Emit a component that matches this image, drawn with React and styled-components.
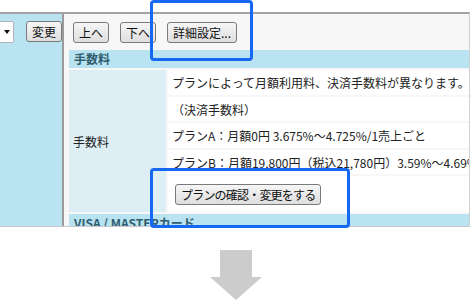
import styled, { createGlobalStyle } from 'styled-components';

const GlobalStyle = createGlobalStyle`
  html, body {
    margin: 0;
    padding: 0;
    background: #fff;
  }
  body {
    font-family: "Noto Sans CJK JP", "Noto Sans", sans-serif;
    font-size: 12px;
    color: #222;
  }
`;

const rows = [
  'プランによって月額利用料、決済手数料が異なります。',
  '（決済手数料）',
  'プランA：月額0円 3.675%～4.725%/1売上ごと',
  'プランB：月額19,800円（税込21,780円）3.59%～4.69%/1売上ごと',
];

export default function App() {
  return (
    <>
      <GlobalStyle />
      <Page>
        <Frame>
          <Sidebar>
            <SelectStub>
              <Caret />
            </SelectStub>
            <Button>変更</Button>
          </Sidebar>
          <Main>
            <Toolbar>
              <Button>上へ</Button>
              <Button>下へ</Button>
              <Button>詳細設定...</Button>
            </Toolbar>
            <SectionHead>手数料</SectionHead>
            <FeeTable>
              <LabelCell>手数料</LabelCell>
              {rows.map((text) => (
                <TextCell key={text}>{text}</TextCell>
              ))}
              <ButtonCell>
                <Button $tight>プランの確認・変更をする</Button>
              </ButtonCell>
            </FeeTable>
            <SectionHead $next>VISA / MASTERカード</SectionHead>
          </Main>
        </Frame>

        <ArrowArea>
          <svg width="52" height="50" viewBox="0 0 52 50">
            <path d="M10 0 H42 V27 H52 L26 50 L0 27 H10 Z" fill="#cccccc" />
          </svg>
        </ArrowArea>

        <Highlight $x={150} $y={0} $w={103} $h={61} />
        <Highlight $x={150} $y={168} $w={200} $h={60} />
      </Page>
    </>
  );
}

const Page = styled.div`
  position: relative;
  width: 472px;
  height: 300px;
  overflow: hidden;
  background: #fff;
`;

const Frame = styled.div`
  margin-top: 12px;
  width: 469px;
  height: 212px;
  border-top: 2px solid #a3a3a3;
  border-right: 1px solid #d0d0d0;
  border-bottom: 1px solid #c8c8c8;
  display: grid;
  grid-template-columns: 64px 1fr;
  overflow: hidden;
  background: #f7f7f7;
`;

const Sidebar = styled.div`
  background: #b9e3f0;
  border-right: 2px solid #9a9a9a;
  display: flex;
  align-items: flex-start;
  gap: 12px;
  padding-top: 7px;
`;

const SelectStub = styled.div`
  width: 14px;
  height: 22px;
  box-sizing: border-box;
  background: #fff;
  border: 1px solid #b5b5b5;
  border-left: none;
  border-radius: 0 2px 2px 0;
  display: flex;
  align-items: center;
  padding-left: 4px;
`;

const Caret = styled.span`
  width: 0;
  height: 0;
  border-left: 3px solid transparent;
  border-right: 3px solid transparent;
  border-top: 4px solid #111;
`;

const Main = styled.div`
  display: flex;
  flex-direction: column;
  min-width: 0;
`;

const Toolbar = styled.div`
  display: flex;
  align-items: center;
  gap: 11px;
  padding: 8px 0 0 9px;
`;

const Button = styled.button`
  height: 21px;
  padding: 0 5px;
  border: 1px solid #7a7a7a;
  border-radius: 3px;
  background: linear-gradient(#f6f6f6, #dedede);
  font-family: "Noto Sans CJK JP", sans-serif;
  font-size: 12px;
  line-height: 19px;
  color: #111;
  letter-spacing: ${(p) => (p.$tight ? '-0.8px' : '0')};
  white-space: nowrap;
`;

const SectionHead = styled.div`
  margin: ${(p) => (p.$next ? '2px' : '7px')} 0 0 5px;
  height: 18px;
  flex-shrink: 0;
  background: #b9e3f0;
  padding-left: 5px;
  font-weight: bold;
  font-size: 12px;
  line-height: 18px;
  color: #2f5d70;
  white-space: nowrap;
`;

const FeeTable = styled.div`
  margin: 2px 0 0 5px;
  display: grid;
  grid-template-columns: 97px 1fr;
  grid-template-rows: 25px 24px 25px 24px 36px;
  gap: 2px;
`;

const LabelCell = styled.div`
  grid-row: 1 / span 5;
  background: #ddeef5;
  display: flex;
  align-items: center;
  padding-left: 4px;
  font-size: 12px;
`;

const TextCell = styled.div`
  background: #fff;
  padding-left: 4px;
  font-size: 12px;
  line-height: 25px;
  white-space: nowrap;
  overflow: hidden;
`;

const ButtonCell = styled.div`
  background: #fff;
  display: flex;
  align-items: center;
  padding-left: 7px;
`;

const ArrowArea = styled.div`
  display: flex;
  justify-content: center;
  padding-top: 23px;
  svg {
    display: block;
  }
`;

const Highlight = styled.div`
  position: absolute;
  left: ${(p) => p.$x}px;
  top: ${(p) => p.$y}px;
  width: ${(p) => p.$w}px;
  height: ${(p) => p.$h}px;
  box-sizing: border-box;
  border: 3px solid #1667f2;
  border-radius: 4px;
  pointer-events: none;
`;
